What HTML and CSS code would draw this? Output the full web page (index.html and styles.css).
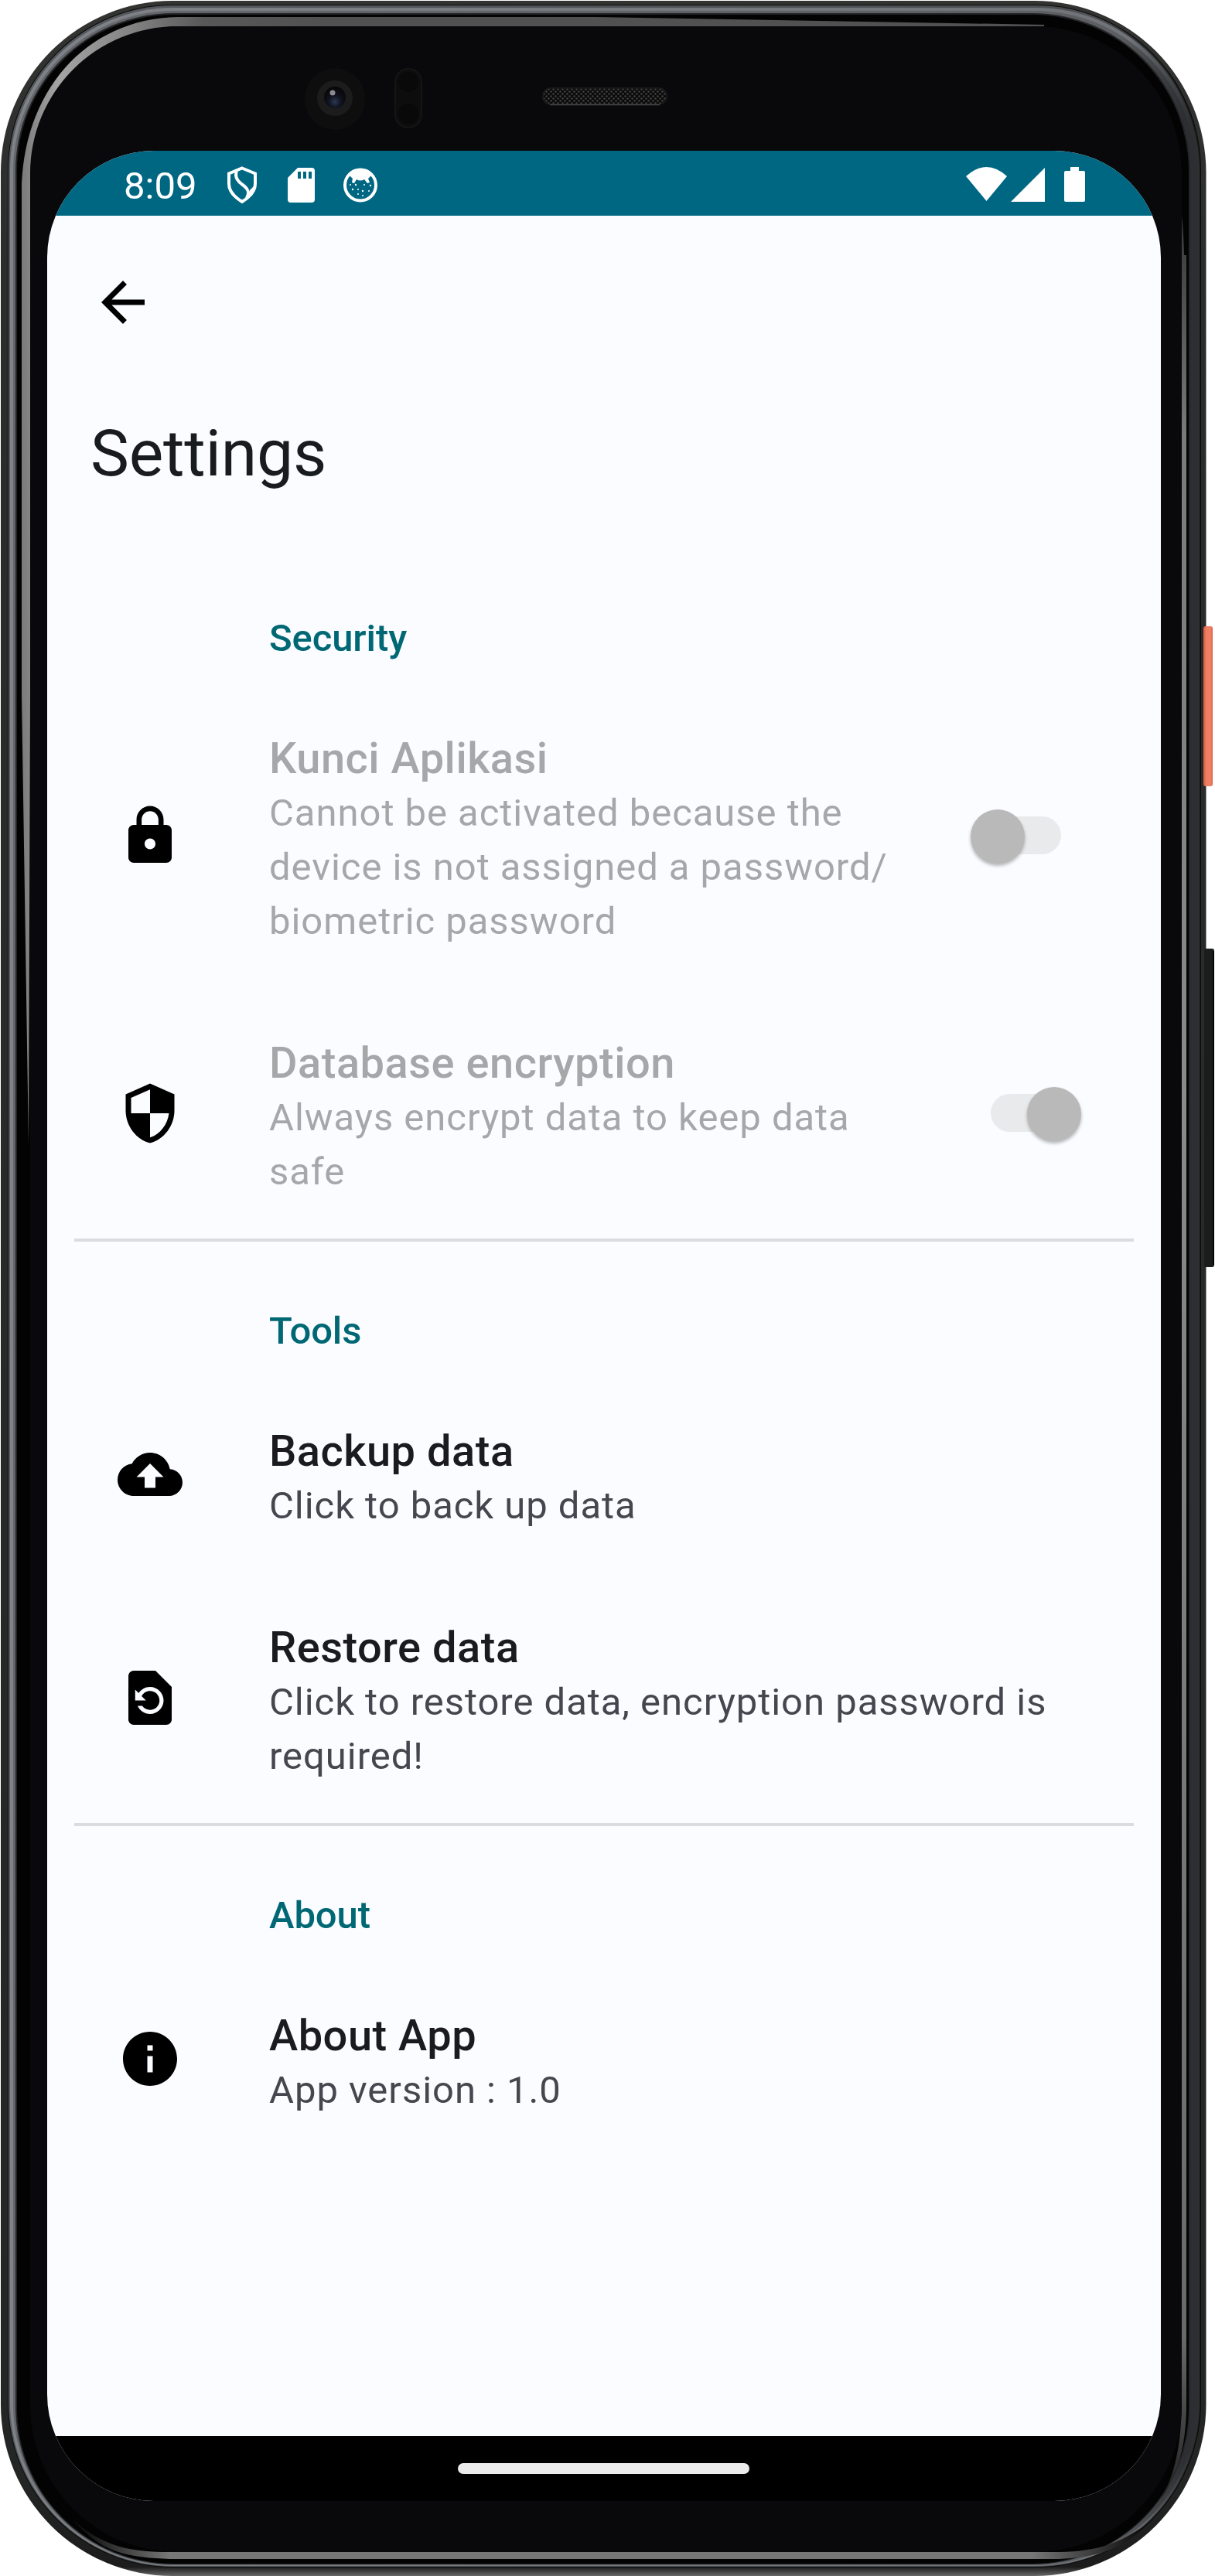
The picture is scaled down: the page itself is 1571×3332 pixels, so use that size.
FILE: index.html
```html
<!DOCTYPE html>
<html lang="en">
<head>
<meta charset="utf-8">
<title>Settings</title>
<link rel="stylesheet" href="styles.css">
</head>
<body>
<div class="phone">
  <svg class="frame" viewBox="0 0 1571 3332" aria-hidden="true">
    <defs>
      <linearGradient id="shell" x1="0" y1="0" x2="0" y2="3332" gradientUnits="userSpaceOnUse">
        <stop offset="0" stop-color="#333431"/><stop offset=".1" stop-color="#2b2d2d"/><stop offset=".96" stop-color="#242525"/><stop offset=".9965" stop-color="#1c1c1c"/><stop offset="1" stop-color="#6a6868"/>
      </linearGradient>
      <linearGradient id="metal1" x1="0" x2="1571" y1="0" y2="0" gradientUnits="userSpaceOnUse">
        <stop offset="0" stop-color="#55585c"/><stop offset=".9" stop-color="#4c4e52"/><stop offset=".975" stop-color="#191a1b"/>
      </linearGradient>
      <linearGradient id="metal2" x1="0" x2="1571" y1="0" y2="0" gradientUnits="userSpaceOnUse">
        <stop offset="0" stop-color="#7f8287"/><stop offset=".93" stop-color="#707378"/><stop offset=".98" stop-color="#2d2f31"/>
      </linearGradient>
      <linearGradient id="metal3" x1="0" x2="1571" y1="0" y2="0" gradientUnits="userSpaceOnUse">
        <stop offset="0" stop-color="#63666a"/><stop offset=".92" stop-color="#5c5e62"/><stop offset=".975" stop-color="#2c2e31"/>
      </linearGradient>
      <linearGradient id="glow" x1="28" y1="0" x2="420" y2="0" gradientUnits="userSpaceOnUse">
        <stop offset="0" stop-color="#7b7b7b"/><stop offset=".12" stop-color="#a4a4a4"/><stop offset=".35" stop-color="#858585"/><stop offset=".6" stop-color="#585858"/><stop offset="1" stop-color="#515151"/>
      </linearGradient>
      <linearGradient id="sideFade" x1="0" y1="200" x2="0" y2="3235" gradientUnits="userSpaceOnUse">
        <stop offset="0" stop-color="#222"/><stop offset=".12" stop-color="#7a7a7a"/><stop offset=".4" stop-color="#8a8a8a"/><stop offset=".93" stop-color="#696969"/><stop offset="1" stop-color="#202020"/>
      </linearGradient>
      <linearGradient id="bottomGlow" x1="110" y1="0" x2="1470" y2="0" gradientUnits="userSpaceOnUse">
        <stop offset="0" stop-color="#111"/><stop offset=".08" stop-color="#777"/><stop offset=".9" stop-color="#777"/><stop offset="1" stop-color="#111"/>
      </linearGradient>
      <linearGradient id="power" x1="1556" y1="0" x2="1568" y2="0" gradientUnits="userSpaceOnUse">
        <stop offset="0" stop-color="#d4583c"/><stop offset=".3" stop-color="#ef7c60"/><stop offset=".75" stop-color="#ee8266"/><stop offset="1" stop-color="#dc6246"/>
      </linearGradient>
      <radialGradient id="lens" cx=".5" cy=".7" r=".6">
        <stop offset="0" stop-color="#2c3754"/><stop offset=".5" stop-color="#10121c"/><stop offset="1" stop-color="#08080a"/>
      </radialGradient>
      <pattern id="mesh" width="6" height="6" patternUnits="userSpaceOnUse">
        <rect width="6" height="6" fill="#0b0b0b"/><circle cx="1.5" cy="1.5" r="1.2" fill="#454545"/><circle cx="4.5" cy="4.5" r="1.2" fill="#454545"/>
      </pattern>
    </defs>
    <rect x="1" y="1" width="1558.500" height="3331" rx="222" fill="url(#shell)"/>
    <rect x="1556" y="810" width="12" height="207" rx="3" fill="url(#power)"/>
    <rect x="1557" y="1227" width="13" height="412" rx="3" fill="#1b1c1c"/>
    <rect x="1568" y="1230" width="2" height="406" fill="#050505"/>
    <rect x="10" y="6" width="1543" height="3315" rx="214" fill="#0a0a0b"/>
    <rect x="11" y="7" width="1541" height="3313" rx="213" fill="url(#metal1)"/>
    <rect x="13" y="10" width="1538" height="3309" rx="211" fill="url(#metal2)"/>
    <rect x="17" y="14" width="1529" height="3304" rx="207" fill="url(#metal3)"/>
    <rect x="20" y="17" width="1519" height="3300" rx="204" fill="#242528"/>
    <rect x="22" y="19" width="1515" height="3297" rx="202" fill="#030303"/>
    <path d="M37 1480 28 900V250C28 120 110 24 230 22H770L1350 32V34H230C125 36 39 130 39 260V900Z" fill="url(#glow)"/>
    <path d="M1507 200C1523 235 1530 270 1531 330L1534 330V3110C1534 3170 1520 3205 1500 3235C1520 3200 1528 3160 1528 3100V400C1528 320 1522 260 1507 200Z" fill="url(#sideFade)"/>
    <path d="M95 3260C135 3295 170 3301 220 3301H1370C1420 3300 1450 3290 1492 3258C1450 3300 1420 3307 1370 3310H220C160 3308 130 3300 95 3260Z" fill="url(#bottomGlow)"/>
    <rect x="39" y="34" width="1489" height="3267" rx="190" fill="#09090b"/>
    <ellipse cx="433" cy="128" rx="39" ry="40" fill="#0e0e0f"/>
    <circle cx="433" cy="127" r="23" fill="#1c1c1d"/>
    <circle cx="433" cy="126" r="14" fill="url(#lens)"/>
    <circle cx="430" cy="120" r="3.5" fill="#8c8990"/>
    <rect x="511" y="89" width="34" height="76" rx="17" fill="#0d0d0e" stroke="#151516" stroke-width="2"/>
    <circle cx="528" cy="106" r="13" fill="#09090a"/><circle cx="528" cy="147" r="13" fill="#09090a"/>
    <rect x="702" y="114" width="160" height="21" rx="10" fill="url(#mesh)" stroke="#1c1c1c" stroke-width="1.5"/>
    <path d="M711 135.500H853" stroke="#484848" stroke-width="1.500"/>
  </svg>

  <div class="screen">
    <div class="status">
      <span class="time">8:09</span>
      <svg class="s-shield" viewBox="0 0 40 48"><path d="M20 2.500 37 9.500V23C37 34 28 41 20 46 12 41 3 34 3 23V9.500Z" fill="none" stroke="#fff" stroke-width="4"/><path d="M13 7C10 14 14 19 20 23.500 28 29 30 34 26 41" fill="none" stroke="#fff" stroke-width="4"/><path d="M25 42 30 31 37 24 31 38Z" fill="#fff"/></svg>
      <svg class="s-card" viewBox="0 0 35 45"><path d="M13 0H31Q35 0 35 4V41Q35 45 31 45H4Q0 45 0 41V13Z" fill="#fff"/><path d="M13 5h4v9h-4zM20 5h4v9h-4zM27 5h4v9h-4z" fill="#006783"/></svg>
      <svg class="s-face" viewBox="0 0 44 45"><circle cx="22" cy="22.500" r="20" fill="none" stroke="#fff" stroke-width="4"/><path d="M7 9Q22-4 37 9L32 14 34 19 31 20 27 15Q22 18 17 15L14 20 11 19 12 14Z" fill="#fff"/><g fill="#fff"><circle cx="9" cy="22" r="1"/><circle cx="16" cy="22" r="1.200"/><circle cx="27" cy="22" r="1"/><circle cx="35" cy="23" r="1.200"/><circle cx="12" cy="28" r="1.200"/><circle cx="19" cy="28" r="1"/><circle cx="25" cy="30" r="1.200"/><circle cx="33" cy="30" r="1"/><circle cx="19" cy="34" r="1"/><circle cx="25" cy="36" r="1"/></g></svg>
      <svg class="s-wifi" viewBox="0 0 53 44"><path d="M0 12Q26.500-12 53 12L26.500 44Z" fill="#fff"/></svg>
      <svg class="s-signal" viewBox="0 0 44 44"><path d="M44 0V44H0Z" fill="#fff"/></svg>
      <svg class="s-battery" viewBox="0 0 27 45"><path d="M8 0H19V5H25Q27 5 27 7V43Q27 45 25 45H2Q0 45 0 43V7Q0 5 2 5H8Z" fill="#fff"/></svg>
    </div>

    <main class="content">
      <svg class="icon back" viewBox="0 0 24 24"><path d="M20 11H7.830l5.590-5.590L12 4l-8 8 8 8 1.410-1.410L7.830 13H20z"/></svg>
      <h1 class="title">Settings</h1>

      <section class="group">
        <h2 class="heading">Security</h2>
        <div class="row disabled">
          <svg class="icon" viewBox="0 0 24 24"><path d="M18 8h-1V6c0-2.760-2.240-5-5-5S7 3.240 7 6v2H6c-1.100 0-2 .9-2 2v10c0 1.100.9 2 2 2h12c1.100 0 2-.9 2-2V10c0-1.100-.9-2-2-2zm-6 9c-1.100 0-2-.9-2-2s.9-2 2-2 2 .9 2 2-.9 2-2 2zm3.100-9H8.900V6c0-1.710 1.390-3.100 3.100-3.100s3.100 1.390 3.100 3.100z"/></svg>
          <div class="text">
            <div class="name">Kunci Aplikasi</div>
            <div class="desc">Cannot be activated because the<br>device is not assigned a password/<br>biometric password</div>
          </div>
          <div class="switch inset"><span class="thumb"></span></div>
        </div>
        <div class="row disabled">
          <svg class="icon" viewBox="0 0 24 24"><path d="M12 1L3 5v6c0 5.550 3.840 10.740 9 12 5.160-1.260 9-6.450 9-12V5zm0 10.990h7c-.53 4.120-3.280 7.790-7 8.940V12H5V6.300l7-3.110z"/></svg>
          <div class="text">
            <div class="name">Database encryption</div>
            <div class="desc">Always encrypt data to keep data<br>safe</div>
          </div>
          <div class="switch on"><span class="thumb"></span></div>
        </div>
      </section>

      <section class="group">
        <h2 class="heading">Tools</h2>
        <div class="row">
          <svg class="icon" viewBox="0 0 24 24"><path d="M19.350 10.040C18.670 6.590 15.640 4 12 4 9.110 4 6.600 5.640 5.350 8.040 2.340 8.360 0 10.910 0 14c0 3.310 2.690 6 6 6h13c2.760 0 5-2.240 5-5 0-2.640-2.050-4.780-4.650-4.960zM14 13v4h-4v-4H7l5-5 5 5z"/></svg>
          <div class="text">
            <div class="name">Backup data</div>
            <div class="desc">Click to back up data</div>
          </div>
        </div>
        <div class="row">
          <svg class="icon" viewBox="0 0 24 24"><path d="M14 2H6c-1.100 0-1.990.9-1.990 2L4 20c0 1.100.89 2 1.990 2H18c1.100 0 2-.9 2-2V8zm-2 16c-2.050 0-3.810-1.240-4.580-3h1.710c.63.9 1.680 1.500 2.870 1.500 1.930 0 3.500-1.570 3.500-3.500S13.930 9.500 12 9.500c-1.350 0-2.520.78-3.100 1.900l1.600 1.600h-4V9l1.300 1.300C8.690 8.920 10.230 8 12 8c2.760 0 5 2.240 5 5s-2.240 5-5 5z"/></svg>
          <div class="text">
            <div class="name">Restore data</div>
            <div class="desc">Click to restore data, encryption password is<br>required!</div>
          </div>
        </div>
      </section>

      <section class="group">
        <h2 class="heading">About</h2>
        <div class="row">
          <svg class="icon" viewBox="0 0 24 24"><path d="M12 2C6.480 2 2 6.480 2 12s4.480 10 10 10 10-4.480 10-10S17.520 2 12 2zm1 15h-2v-6h2zm0-8h-2V7h2z"/></svg>
          <div class="text">
            <div class="name">About App</div>
            <div class="desc">App version : 1.0</div>
          </div>
        </div>
      </section>
    </main>

    <div class="nav"><span class="handle"></span></div>
  </div>
</div>
</body>
</html>
```
FILE: styles.css
```css
* { box-sizing: border-box; }
body { margin: 0; background: #fff; font-family: Roboto, "Liberation Sans", sans-serif; }

.phone { display: grid; width: 1571px; height: 3332px; overflow: hidden; }
.frame, .screen { grid-area: 1 / 1; }
.frame { display: block; width: 1571px; height: 3332px; }

.screen {
  display: flex;
  flex-direction: column;
  width: 1440px;
  height: 3040px;
  margin: 195px 0 0 61px;
  border-radius: 138px;
  overflow: hidden;
  background: #fbfcff;
  z-index: 1;
}

.status {
  display: flex;
  flex: none;
  align-items: flex-start;
  height: 84px;
  padding: 20px 98px 0 99px;
  background: #006783;
}
.status svg { display: block; flex: none; }
.time { width: 133px; font-size: 49px; line-height: 49px; color: #fff; margin-top: 1px; }
.s-shield { width: 40px; height: 48px; }
.s-card { width: 35px; height: 45px; margin: 2px 0 0 39px; }
.s-face { width: 44px; height: 45px; margin: 2px 0 0 37px; }
.s-wifi { width: 53px; height: 44px; margin: 1px 0 0 auto; }
.s-signal { width: 44px; height: 44px; margin: 2px 0 0 5px; }
.s-battery { width: 27px; height: 45px; margin: 1px 0 0 25px; }

.content { flex: 1; }
.icon { display: block; flex: none; width: 84px; height: 84px; fill: #000; }
.back { margin: 70px 0 105px 56px; }
.title { margin: 0 0 154px 56px; font-size: 84px; line-height: 98px; font-weight: 400; letter-spacing: -.2px; color: #191c1e; }

.group + .group { padding-top: 80px; }
.group:not(:last-child)::after {
  content: "";
  display: block;
  height: 4px;
  margin: 0 35px;
  background: #dadcdf;
}
.heading { margin: 0 0 23px 287px; padding-top: 1px; font-size: 49px; line-height: 70px; font-weight: 500; letter-spacing: -.1px; color: #006874; }

.row { display: flex; align-items: center; padding: 62px 0 52px 91px; }
.row .icon { margin-bottom: 10px; }
.text { flex: 1; margin-left: 112px; margin-bottom: -1px; white-space: nowrap; }
.name { margin-bottom: 1px; font-size: 56px; line-height: 70px; font-weight: 500; letter-spacing: .5px; color: #1b1b1f; }
.desc { font-size: 49px; line-height: 70px; letter-spacing: .960px; color: #46464f; }
.disabled .name, .disabled .desc { color: #a6a7a9; }

.switch {
  display: flex;
  align-items: center;
  flex: none;
  width: 117px;
  height: 49px;
  margin: 0 103px 11px 0;
  border-radius: 25px;
  background: linear-gradient(#e9eaec, #e9eaec) right / 90px 49px no-repeat;
}
.switch.inset { margin-right: 129px; }
.switch.on { justify-content: flex-end; background-position: left; }
.thumb { width: 70px; height: 70px; margin-top: 3px; border-radius: 50%; background: #b9b9b9; box-shadow: 0 3px 4px rgba(0, 0, 0, .28); }

.nav { display: flex; flex: none; justify-content: center; height: 84px; padding: 35px 2px 0 0; background: #000; }
.handle { width: 377px; height: 14px; border-radius: 7px; background: #ebebeb; }
```
